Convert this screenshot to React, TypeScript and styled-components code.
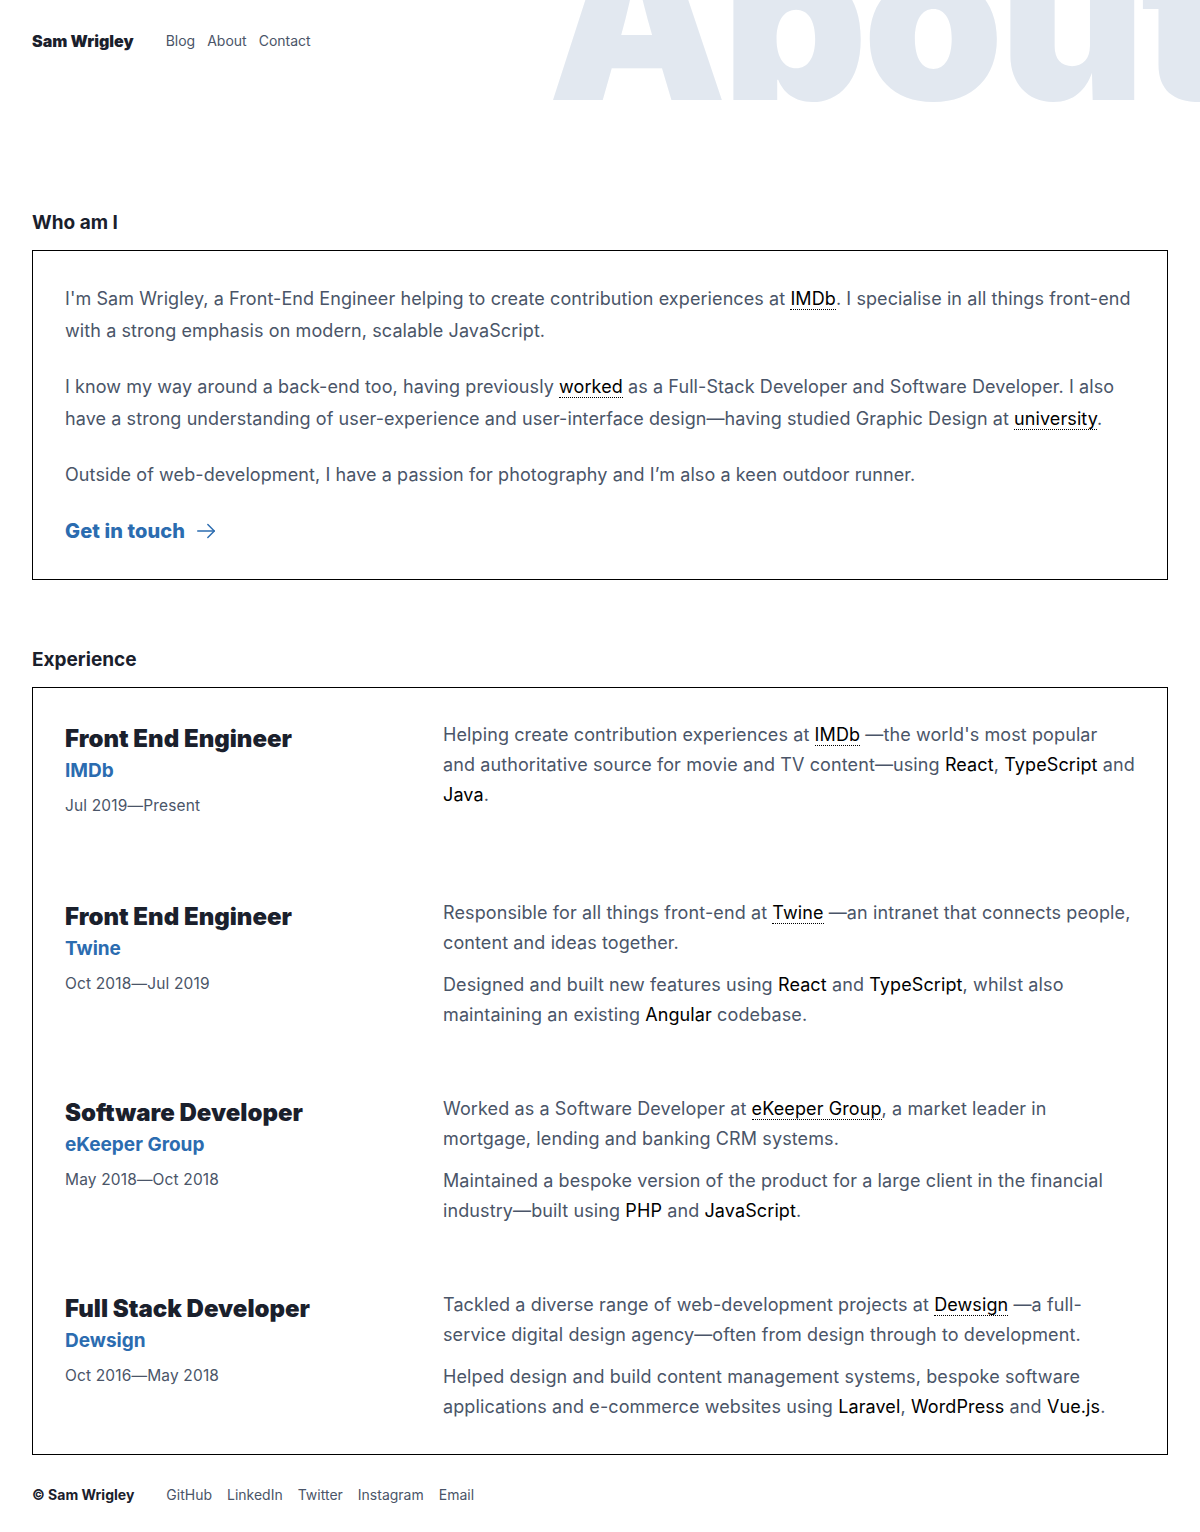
import React from "react";
import styled, { createGlobalStyle } from "styled-components";

const Global = createGlobalStyle`
  html, body { margin: 0; padding: 0; background: #fff; }
  body { font-family: Inter, "Noto Sans", "Liberation Sans", sans-serif; color: #1a202c; -webkit-font-smoothing: antialiased; }
  * { box-sizing: border-box; }
`;

const Page = styled.div`
  position: relative;
  overflow: hidden;
  padding: 0 32px;
  min-height: 1532px;
`;

const BigWord = styled.div`
  position: absolute;
  left: 548px;
  top: -94px;
  font-size: 225px;
  line-height: 1;
  font-weight: 900;
  letter-spacing: -0.02em;
  color: #e2e8f0;
  white-space: nowrap;
  z-index: 0;
  user-select: none;
`;

const Header = styled.header`
  position: relative;
  z-index: 1;
  display: flex;
  align-items: center;
  gap: 32px;
  padding-top: 30px;
  height: 52px;
`;

const Brand = styled.a`
  font-size: 16px;
  line-height: 22px;
  font-weight: 900;
  color: #1a202c;
  text-decoration: none;
`;

const Nav = styled.nav`
  display: flex;
  gap: 12px;
`;

const NavLink = styled.a`
  font-size: 14px;
  line-height: 22px;
  color: #4a5568;
  text-decoration: none;
`;

const Main = styled.main`
  position: relative;
  z-index: 1;
  padding-top: 157px;
  display: flex;
  flex-direction: column;
  gap: 66px;
`;

const Section = styled.section`
  display: flex;
  flex-direction: column;
  gap: 13px;
`;

const SectionTitle = styled.h2`
  margin: 0;
  font-size: 19px;
  line-height: 28px;
  font-weight: 700;
  color: #1a202c;
`;

const Box = styled.div`
  border: 1px solid #000;
  padding: 32px;
`;

const Para = styled.p<{ $lh?: number; $gap?: number; $ls?: number }>`
  margin: 0 0 ${(p) => p.$gap ?? 24}px;
  font-size: 18px;
  line-height: ${(p) => p.$lh ?? 32}px;
  letter-spacing: ${(p) => p.$ls ?? 0.005}em;
  color: #4a5568;
  &:last-child { margin-bottom: 0; }
`;

const Link = styled.a`
  color: #000;
  text-decoration: none;
  border-bottom: 1px dotted #000;
`;

const Tech = styled.span`
  color: #000;
`;

const CTA = styled.a`
  display: inline-flex;
  align-items: center;
  gap: 10px;
  font-size: 20px;
  line-height: 32px;
  font-weight: 800;
  letter-spacing: 0.005em;
  color: #2b6cb0;
  text-decoration: none;
`;

const Entries = styled.div`
  display: flex;
  flex-direction: column;
  gap: 64px;
`;

const Entry = styled.div`
  display: grid;
  grid-template-columns: 1fr 2fr;
  column-gap: 32px;
  align-items: start;
`;

const EntryMeta = styled.div`
  display: flex;
  flex-direction: column;
  padding-bottom: 16px;
`;

const Role = styled.h3`
  margin: 0;
  font-size: 24px;
  line-height: 38px;
  font-weight: 900;
  color: #1a202c;
`;

const Company = styled.div`
  font-size: 19px;
  line-height: 26px;
  font-weight: 700;
  color: #2b6cb0;
`;

const Dates = styled.div`
  margin-top: 10px;
  font-size: 15.5px;
  line-height: 24px;
  letter-spacing: 0.01em;
  color: #4a5568;
`;

const Footer = styled.footer`
  position: relative;
  z-index: 1;
  display: flex;
  align-items: center;
  gap: 32px;
  padding: 29px 0 30px;
`;

const Copy = styled.span`
  font-size: 14px;
  line-height: 22px;
  font-weight: 700;
  color: #1a202c;
`;

const FooterLinks = styled.div`
  display: flex;
  gap: 15px;
`;

const Arrow = () => (
  <svg width="22" height="22" viewBox="0 0 24 24" fill="none" stroke="#2b6cb0" strokeWidth="1.6" strokeLinecap="round" strokeLinejoin="round">
    <path d="M3 12h18" />
    <path d="M14 5l7 7-7 7" />
  </svg>
);

type Job = {
  role: string;
  company: string;
  dates: string;
  body: React.ReactNode[];
};

const jobs: Job[] = [
  {
    role: "Front End Engineer",
    company: "IMDb",
    dates: "Jul 2019\u2014Present",
    body: [
      <>
        Helping create contribution experiences at <Link href="#">IMDb</Link> —the world's most popular
        <br />
        and authoritative source for movie and TV content—using <Tech>React</Tech>, <Tech>TypeScript</Tech> and{" "}
        <Tech>Java</Tech>.
      </>,
    ],
  },
  {
    role: "Front End Engineer",
    company: "Twine",
    dates: "Oct 2018\u2014Jul 2019",
    body: [
      <>
        Responsible for all things front-end at <Link href="#">Twine</Link> —an intranet that connects people,
        content and ideas together.
      </>,
      <>
        Designed and built new features using <Tech>React</Tech> and <Tech>TypeScript</Tech>, whilst also
        maintaining an existing <Tech>Angular</Tech> codebase.
      </>,
    ],
  },
  {
    role: "Software Developer",
    company: "eKeeper Group",
    dates: "May 2018\u2014Oct 2018",
    body: [
      <>
        Worked as a Software Developer at <Link href="#">eKeeper Group</Link>, a market leader in mortgage,
        lending and banking CRM systems.
      </>,
      <>
        Maintained a bespoke version of the product for a large client in the financial industry—built using{" "}
        <Tech>PHP</Tech> and <Tech>JavaScript</Tech>.
      </>,
    ],
  },
  {
    role: "Full Stack Developer",
    company: "Dewsign",
    dates: "Oct 2016\u2014May 2018",
    body: [
      <>
        Tackled a diverse range of web-development projects at <Link href="#">Dewsign</Link> —a full-service
        digital design agency—often from design through to development.
      </>,
      <>
        Helped design and build content management systems, bespoke software applications and e-commerce
        websites using <Tech>Laravel</Tech>, <Tech>WordPress</Tech> and <Tech>Vue.js</Tech>.
      </>,
    ],
  },
];

export default function App() {
  return (
    <>
      <Global />
      <Page>
        <BigWord aria-hidden="true">About</BigWord>
        <Header>
          <Brand href="#">Sam Wrigley</Brand>
          <Nav>
            <NavLink href="#">Blog</NavLink>
            <NavLink href="#">About</NavLink>
            <NavLink href="#">Contact</NavLink>
          </Nav>
        </Header>
        <Main>
          <Section>
            <SectionTitle>Who am I</SectionTitle>
            <Box>
              <Para>
                I'm Sam Wrigley, a Front-End Engineer helping to create contribution experiences at{" "}
                <Link href="#">IMDb</Link>. I specialise in all things front-end with a strong emphasis on modern,
                scalable JavaScript.
              </Para>
              <Para>
                I know my way around a back-end too, having previously <Link href="#">worked</Link> as a Full-Stack
                Developer and Software Developer. I also have a strong understanding of user-experience and
                user-interface design—having studied Graphic Design at <Link href="#">university</Link>.
              </Para>
              <Para>Outside of web-development, I have a passion for photography and I’m also a keen outdoor runner.</Para>
              <CTA href="#">
                Get in touch <Arrow />
              </CTA>
            </Box>
          </Section>
          <Section>
            <SectionTitle>Experience</SectionTitle>
            <Box>
              <Entries>
                {jobs.map((job, i) => (
                  <Entry key={i}>
                    <EntryMeta>
                      <Role>{job.role}</Role>
                      <Company>{job.company}</Company>
                      <Dates>{job.dates}</Dates>
                    </EntryMeta>
                    <div>
                      {job.body.map((b, j) => (
                        <Para key={j} $lh={30} $gap={12} $ls={0.006}>
                          {b}
                        </Para>
                      ))}
                    </div>
                  </Entry>
                ))}
              </Entries>
            </Box>
          </Section>
        </Main>
        <Footer>
          <Copy>© Sam Wrigley</Copy>
          <FooterLinks>
            <NavLink href="#">GitHub</NavLink>
            <NavLink href="#">LinkedIn</NavLink>
            <NavLink href="#">Twitter</NavLink>
            <NavLink href="#">Instagram</NavLink>
            <NavLink href="#">Email</NavLink>
          </FooterLinks>
        </Footer>
      </Page>
    </>
  );
}
